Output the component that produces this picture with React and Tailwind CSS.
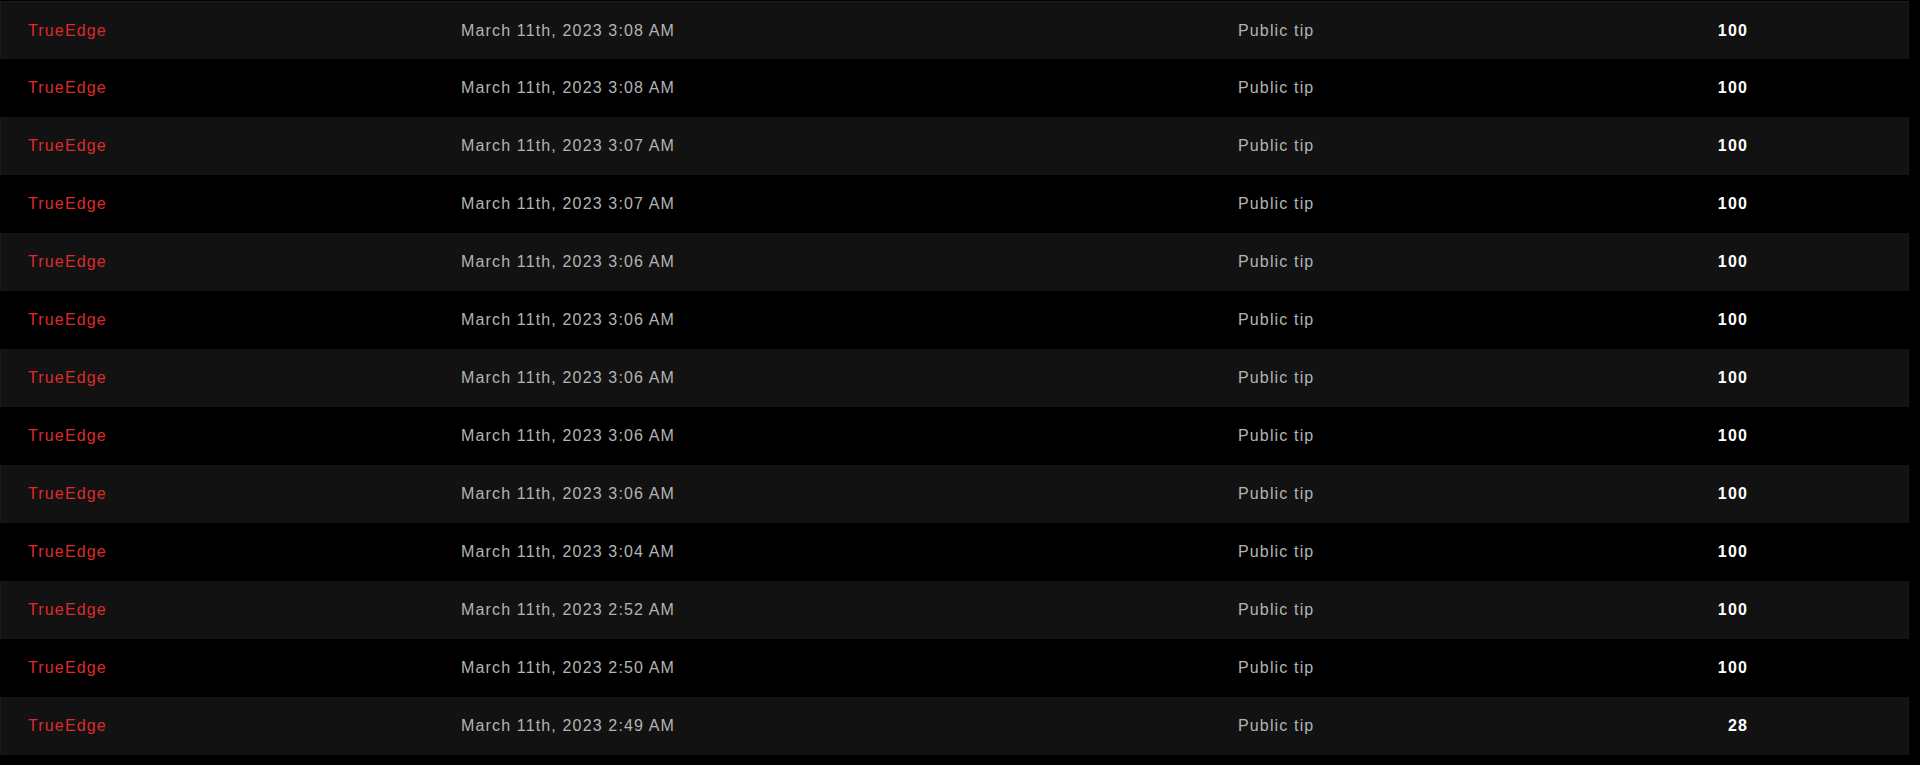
const tips = [
  { user: "TrueEdge", date: "March 11th, 2023 3:08 AM", type: "Public tip", amount: 100 },
  { user: "TrueEdge", date: "March 11th, 2023 3:08 AM", type: "Public tip", amount: 100 },
  { user: "TrueEdge", date: "March 11th, 2023 3:07 AM", type: "Public tip", amount: 100 },
  { user: "TrueEdge", date: "March 11th, 2023 3:07 AM", type: "Public tip", amount: 100 },
  { user: "TrueEdge", date: "March 11th, 2023 3:06 AM", type: "Public tip", amount: 100 },
  { user: "TrueEdge", date: "March 11th, 2023 3:06 AM", type: "Public tip", amount: 100 },
  { user: "TrueEdge", date: "March 11th, 2023 3:06 AM", type: "Public tip", amount: 100 },
  { user: "TrueEdge", date: "March 11th, 2023 3:06 AM", type: "Public tip", amount: 100 },
  { user: "TrueEdge", date: "March 11th, 2023 3:06 AM", type: "Public tip", amount: 100 },
  { user: "TrueEdge", date: "March 11th, 2023 3:04 AM", type: "Public tip", amount: 100 },
  { user: "TrueEdge", date: "March 11th, 2023 2:52 AM", type: "Public tip", amount: 100 },
  { user: "TrueEdge", date: "March 11th, 2023 2:50 AM", type: "Public tip", amount: 100 },
  { user: "TrueEdge", date: "March 11th, 2023 2:49 AM", type: "Public tip", amount: 28 },
];

const App = () => {
  return (
    <div className="min-h-[765px] w-full bg-black font-[Liberation_Sans,Arial,sans-serif] text-base tracking-[1.15px]">
      <div className="w-[1909px] pt-px">
        {tips.map((t, i) => (
          <div
            key={i}
            className={`grid h-[58px] grid-cols-[460px_777px_1fr_auto] items-center border-x pr-[160px] ${
              i % 2 === 0
                ? "bg-[#121212] border-[#1b1b1b]"
                : "bg-black border-black"
            } ${i === 0 ? "border-t" : ""}`}
          >
            <div className="pl-[27px] text-[#de2a2a]">{t.user}</div>
            <div className="text-[#b4b4b4]">{t.date}</div>
            <div className="text-[#b4b4b4]">{t.type}</div>
            <div className="text-right font-bold text-white">{t.amount}</div>
          </div>
        ))}
      </div>
    </div>
  );
};

export default App;
